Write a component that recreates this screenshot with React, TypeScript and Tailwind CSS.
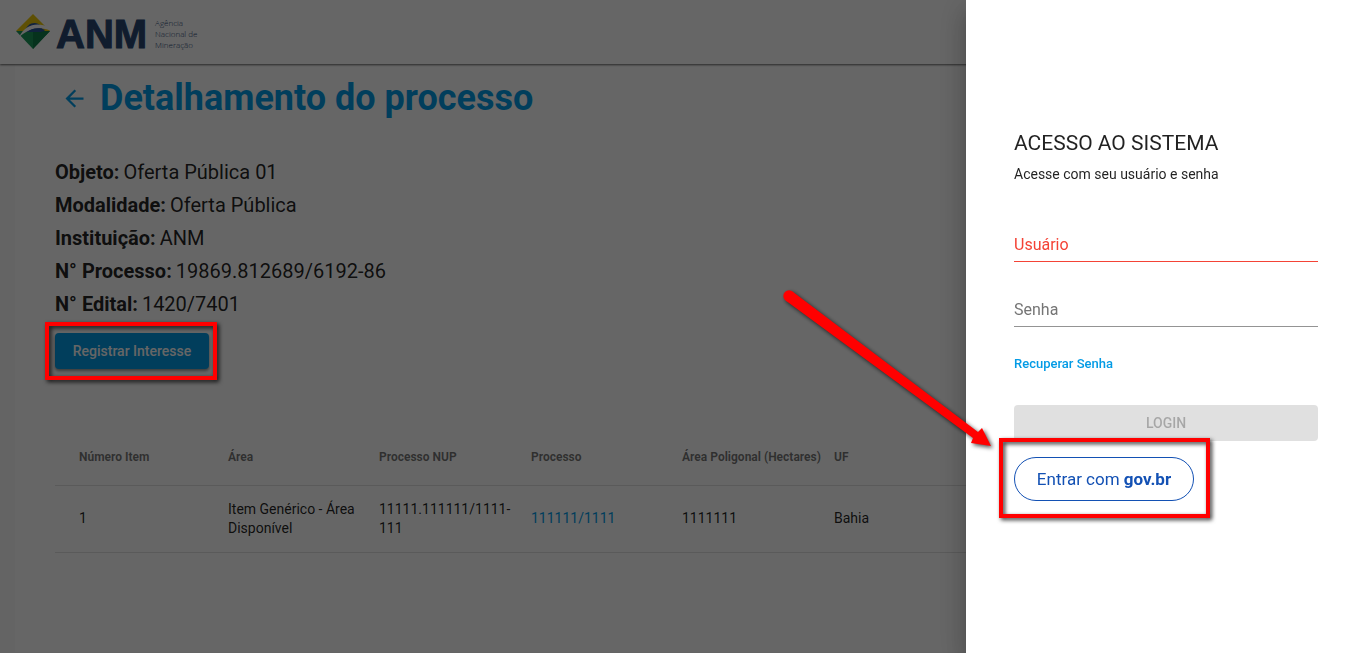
import { MdArrowBack } from "react-icons/md";

const details = [
  { label: "Objeto:", value: "Oferta Pública 01" },
  { label: "Modalidade:", value: "Oferta Pública" },
  { label: "Instituição:", value: "ANM" },
  { label: "N° Processo:", value: "19869.812689/6192-86" },
  { label: "N° Edital:", value: "1420/7401" },
];

const calloutClass =
  "pointer-events-none absolute border-4 border-[#ff0000] drop-shadow-[2px_2px_2px_rgba(0,0,0,0.8)]";

function Logo() {
  return (
    <a href="#" className="flex items-center gap-1 text-[#284672]">
      <svg viewBox="0 0 36 36" className="h-9 w-9" aria-hidden="true">
        <path d="M18 0 L35 17 H1 Z" fill="#ecc90c" />
        <path d="M1 17 H35 L18 35 Z" fill="#1d9a5b" />
        <path d="M18 17 H35 L18 35 Z" fill="#0f7d49" />
        <path d="M10 18 C11 9 21 6 26 12 L28 16 Z" fill="#2a5699" />
        <path d="M4 23 C11 10 21 8 35 13 L34 16 C22 12 14 15 4 23 Z" fill="#fff" />
        <path d="M12 18 C17 14 24 13 30 16 L29 17 L26 18 Z" fill="#2a5699" />
      </svg>
      <span className="pt-1 pl-px font-['Liberation_Sans',sans-serif] text-[40px] leading-9 font-bold [-webkit-text-stroke:1px_#284672]">
        ANM
      </span>
      <span className="ml-1 w-12 pt-0.5 font-['Open_Sans',sans-serif] text-[8px] leading-[11px] font-light">
        Agência Nacional&nbsp;de Mineração
      </span>
    </a>
  );
}

function Arrow() {
  return (
    <svg
      viewBox="0 0 220 168"
      className="pointer-events-none absolute -top-[170px] -left-[234px] h-[168px] w-[220px] drop-shadow-[2px_2px_2px_rgba(0,0,0,0.7)]"
      aria-hidden="true"
    >
      <circle cx="9" cy="9" r="5.7" fill="#ff0000" />
      <path d="M12.4 4.4 L198 145 L202 141 L211 159 L191 156 L193 151 L5.6 13.6 Z" fill="#ff0000" />
    </svg>
  );
}

function Field({ id, label, type, invalid }: { id: string; label: string; type: string; invalid?: boolean }) {
  return (
    <div className={invalid ? "grid border-b border-[#f44336] text-[#f44336]" : "grid border-b border-[#949494] text-[#757575]"}>
      <label htmlFor={id} className="pt-0.5 text-base leading-8 [grid-area:1/1]">
        {label}
      </label>
      <input id={id} type={type} className="h-[34px] w-full bg-transparent text-base outline-none [grid-area:1/1]" />
    </div>
  );
}

function ProcessTable() {
  return (
    <table className="w-full table-fixed border-collapse text-left text-sm leading-[19px]">
      <thead>
        <tr className="h-14 border-b border-black/12 text-xs text-black/54">
          <th className="w-[173px] pl-6">Número Item</th>
          <th className="w-[151px]">Área</th>
          <th className="w-[152px]">Processo NUP</th>
          <th className="w-[151px]">Processo</th>
          <th className="w-[152px]">Área Poligonal (Hectares)</th>
          <th>UF</th>
        </tr>
      </thead>
      <tbody>
        <tr className="h-[67px] border-b border-black/12">
          <td className="pl-6">1</td>
          <td className="pr-4">Item Genérico - Área Disponível</td>
          <td className="pr-4">11111.111111/1111-111</td>
          <td>
            <a href="#" className="text-[#039be5]">111111/1111</a>
          </td>
          <td>1111111</td>
          <td>Bahia</td>
        </tr>
      </tbody>
    </table>
  );
}

function LoginPanel() {
  return (
    <aside className="fixed inset-y-0 right-0 z-30 w-full max-w-[400px] bg-white px-12 pt-32 shadow-[0_8px_10px_-5px_rgba(0,0,0,0.2),0_16px_24px_2px_rgba(0,0,0,0.14),0_6px_30px_5px_rgba(0,0,0,0.12)]">
      <form className="flex flex-col">
        <h2 className="text-[21px] leading-[30px]">ACESSO AO SISTEMA</h2>
        <p className="mt-1 text-sm leading-6">Acesse com seu usuário e senha</p>
        <div className="mt-[41px] flex flex-col gap-[30px]">
          <Field id="usuario" label="Usuário" type="text" invalid />
          <Field id="senha" label="Senha" type="password" />
        </div>
        <a href="#" className="mt-7 self-start text-[13px] leading-[18px] font-medium text-[#039be5]">
          Recuperar Senha
        </a>
        <button type="submit" disabled className="mt-8 h-9 rounded bg-[#e0e0e0] text-sm font-medium text-black/26">
          LOGIN
        </button>
        <div className="relative mt-4 self-start">
          <button type="button" className="h-11 w-[180px] rounded-full border border-[#1351b4] pt-0.5 text-[17px] text-[#1351b4]">
            Entrar com <b>gov.br</b>
          </button>
          <span className={`${calloutClass} -top-[19px] -right-4 -bottom-[17px] -left-[15px]`} />
          <Arrow />
        </div>
      </form>
    </aside>
  );
}

export default function App() {
  return (
    <div className="flex min-h-screen flex-col bg-[#fafafa] font-[Roboto,sans-serif] text-black/87">
      <header className="relative flex h-16 items-center bg-white px-[15px] shadow-[0_1px_2px_rgba(0,0,0,0.6)]">
        <Logo />
      </header>
      <main className="mx-[15px] mb-px flex-1 bg-white px-10 pt-2.5">
        <div className="flex items-center gap-3 text-[#039be5]">
          <button type="button" aria-label="Voltar" className="ml-1.5">
            <MdArrowBack className="h-[27px] w-[27px]" />
          </button>
          <h1 className="text-4xl leading-12 font-bold">Detalhamento do processo</h1>
        </div>
        <dl className="mt-[34px] text-xl leading-[33px]">
          {details.map((d) => (
            <div key={d.label} className="flex gap-1">
              <dt className="font-bold">{d.label}</dt>
              <dd>{d.value}</dd>
            </div>
          ))}
        </dl>
        <div className="relative mt-3 w-[154px]">
          <button
            type="button"
            className="h-9 w-full rounded bg-[#039be5] text-sm font-medium text-white shadow-[0_2px_3px_rgba(0,0,0,0.4)]"
          >
            Registrar Interesse
          </button>
          <span className={`${calloutClass} -top-[11px] -right-2 -bottom-[11px] -left-2.5 z-20`} />
        </div>
        <div className="mt-[60px]">
          <ProcessTable />
        </div>
      </main>
      <div className="fixed inset-0 z-10 bg-black/60" />
      <LoginPanel />
    </div>
  );
}
